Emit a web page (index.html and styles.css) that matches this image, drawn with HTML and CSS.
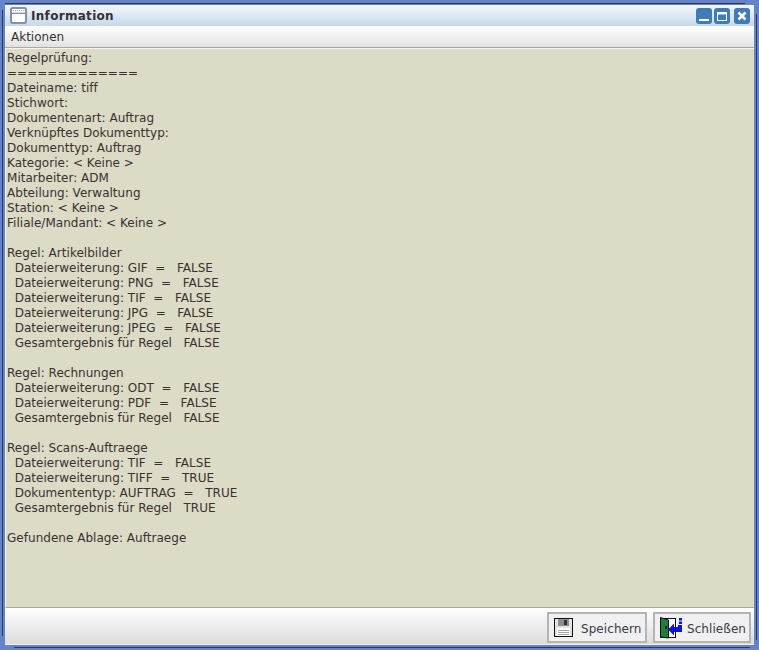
FILE: index.html
```html
<!DOCTYPE html>
<html lang="de">
<head>
    <meta charset="UTF-8">
    <title>Information</title>
    <link rel="stylesheet" href="styles.css">
</head>
<body>
    <div class="window">
        <i class="edge edge-top"></i>
        <i class="edge edge-left"></i>
        <i class="edge edge-right"></i>
        <i class="edge edge-bottom"></i>
        <div class="titlebar">
            <svg class="app-icon" width="17" height="17" viewBox="0 0 17 17">
                <rect x="0" y="0" width="17" height="17" rx="2.500" fill="#8392a5"/>
                <rect x="2" y="2" width="13" height="13" rx="1" fill="#fff"/>
                <path d="M2 6.500h13" stroke="#8392a5" fill="none"/>
                <path d="M2 5.500h13" stroke="#d5dae0" fill="none"/>
                <path d="M3 3.500h1M5 3.500h1M7 3.500h1M9 3.500h1M11 3.500h1M13 3.500h1" stroke="#a7b1be" fill="none"/>
            </svg>
            <span class="title">Information</span>
            <div class="win-buttons">
                <button class="win-btn">
                    <svg width="16" height="16" viewBox="0 0 16 16"><path d="M3 12h10" stroke="#fff" stroke-width="2"/></svg>
                </button>
                <button class="win-btn">
                    <svg width="16" height="16" viewBox="0 0 16 16"><rect x="3.500" y="4.500" width="9" height="8" fill="none" stroke="#fff"/><path d="M3 5.500h10" stroke="#fff" stroke-width="2"/></svg>
                </button>
                <button class="win-btn close">
                    <svg width="16" height="16" viewBox="0 0 16 16"><path d="M4.500 4.500l7 7M11.500 4.500l-7 7" stroke="#fff" stroke-width="2.600"/></svg>
                </button>
            </div>
        </div>
        <div class="menubar"><span class="menu-item">Aktionen</span></div>
        <pre class="content">Regelprüfung:
=============
Dateiname: tiff
Stichwort:
Dokumentenart: Auftrag
Verknüpftes Dokumenttyp:
Dokumenttyp: Auftrag
Kategorie: &lt; Keine &gt;
Mitarbeiter: ADM
Abteilung: Verwaltung
Station: &lt; Keine &gt;
Filiale/Mandant: &lt; Keine &gt;

Regel: Artikelbilder
  Dateierweiterung: GIF  =   FALSE
  Dateierweiterung: PNG  =   FALSE
  Dateierweiterung: TIF  =   FALSE
  Dateierweiterung: JPG  =   FALSE
  Dateierweiterung: JPEG  =   FALSE
  Gesamtergebnis für Regel   FALSE

Regel: Rechnungen
  Dateierweiterung: ODT  =   FALSE
  Dateierweiterung: PDF  =   FALSE
  Gesamtergebnis für Regel   FALSE

Regel: Scans-Auftraege
  Dateierweiterung: TIF  =   FALSE
  Dateierweiterung: TIFF  =   TRUE
  Dokumententyp: AUFTRAG  =   TRUE
  Gesamtergebnis für Regel   TRUE

Gefundene Ablage: Auftraege</pre>
        <div class="footer">
            <button class="btn save">
                <svg width="19" height="19" viewBox="0 0 19 19">
                    <rect x="0.500" y="0.500" width="18" height="18" fill="#e4e4e4" stroke="#111"/>
                    <rect x="4" y="1" width="11" height="7" fill="#8e8e8e"/>
                    <rect x="10" y="2" width="3" height="5" fill="#333"/>
                    <rect x="3" y="10" width="13" height="8" fill="#fff"/>
                    <path d="M4 12.500h11M4 14.500h11M4 16.500h11" stroke="#a5a5a5"/>
                </svg>
                <span>Speichern</span>
            </button>
            <button class="btn close-btn">
                <svg width="23" height="22" viewBox="0 0 23 22">
                    <rect x="0.500" y="1.500" width="15" height="19" fill="#fff" stroke="#111"/>
                    <path d="M0.500 0.500l8 2.500v18l-8-1z" fill="#1d7f3e" stroke="#111"/>
                    <rect x="5" y="9" width="2" height="3" fill="#0b2a14"/>
                    <path d="M18 8h4v7h-8v3.500l-6-6 6-6v3.500h4z" fill="#0a14e6"/>
                    <path d="M19 1h3v2.500h-3zM19 4.500h3v2.500h-3z" fill="#0a14e6"/>
                </svg>
                <span>Schließen</span>
            </button>
        </div>
    </div>
</body>
</html>
```

FILE: styles.css
```css
html, body {
    margin: 0;
    padding: 0;
}

body {
    width: 759px;
    height: 650px;
    background: #6584c8;
    font-family: "DejaVu Sans", sans-serif;
    font-size: 12px;
    color: #333;
    overflow: hidden;
}

.window {
    position: relative;
    box-sizing: border-box;
    display: flex;
    flex-direction: column;
    width: 759px;
    height: 650px;
    padding: 5px 5px 5px 5px;
    background: #6584c8;
}

/* dark lines of the window frame */
.edge {
    position: absolute;
    background: #2e3a5c;
}

.edge-top {
    left: 5px;
    top: 3px;
    width: 740px;
    height: 1px;
}

.edge-left {
    left: 2px;
    top: 10px;
    width: 1px;
    height: 626px;
}

.edge-right {
    left: 756px;
    top: 14px;
    width: 1px;
    height: 626px;
}

.edge-bottom {
    left: 14px;
    top: 647px;
    width: 736px;
    height: 1px;
}

.titlebar {
    display: flex;
    align-items: center;
    flex: none;
    height: 21px;
    padding: 0 4px 0 5px;
    background: linear-gradient(#f4f7fb, #c6d8ea);
}

.app-icon {
    margin-right: 4px;
}

.title {
    font-size: 12px;
    font-weight: bold;
    letter-spacing: 0.3px;
    color: #333;
}

.win-buttons {
    display: flex;
    gap: 2px;
    margin-left: auto;
}

.win-btn {
    display: flex;
    align-items: center;
    justify-content: center;
    width: 16px;
    height: 16px;
    padding: 0;
    border: 0;
    border-radius: 3px;
    background: #3f7bb8;
}

.win-btn.close {
    margin-left: 2px;
}

.menubar {
    flex: none;
    box-sizing: border-box;
    height: 22px;
    padding: 4px 6px 0;
    background: linear-gradient(#ffffff, #e2e2e2);
    border-bottom: 1px solid #a8a8a8;
}

.content {
    flex: 1;
    margin: 0;
    padding: 2px 1px;
    background: #dcdbc6;
    font-family: "DejaVu Sans", sans-serif;
    font-size: 12px;
    letter-spacing: 0.03px;
    line-height: 15px;
    color: #3a3030;
    border-top: 1px solid #f4f4f4;
    border-left: 1px solid #f4f4f4;
    border-bottom: 1px solid #a8a8a8;
    overflow: hidden;
}

.footer {
    display: flex;
    justify-content: flex-end;
    gap: 6px;
    flex: none;
    box-sizing: border-box;
    height: 37px;
    padding: 4px 3px 0 0;
    background: linear-gradient(#ffffff, #dcdcdc);
    border-bottom: 1px solid #f0f0f0;
}

.btn {
    display: flex;
    align-items: center;
    box-sizing: border-box;
    height: 31px;
    padding: 0;
    border: 2px solid #b4b4b4;
    background: #f0f0f0;
    font-family: "DejaVu Sans", sans-serif;
    font-size: 12px;
    letter-spacing: 0.07px;
    color: #3a3a4a;
}

.btn svg {
    flex: none;
}

.btn span {
    padding-top: 2px;
}

.btn.save {
    width: 100px;
    padding-left: 5px;
}

.btn.save span {
    margin-left: 8px;
}

.btn.close-btn {
    width: 98px;
    padding-left: 5px;
}

.btn.close-btn span {
    margin-left: 4px;
}
```
